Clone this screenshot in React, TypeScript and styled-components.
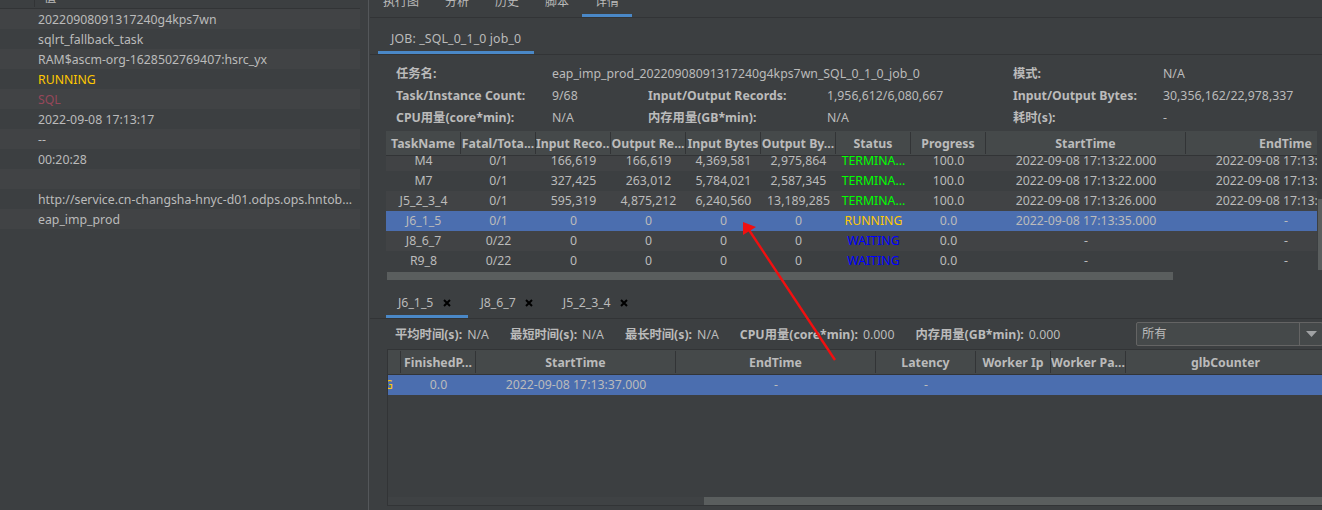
import React from 'react';
import styled, { createGlobalStyle } from 'styled-components';

const colors = {
    bg: '#3c3f41',
    alt: '#414345',
    head: '#45494a',
    line: '#323436',
    text: '#bbbbbb',
    select: '#4b6eaf',
    accent: '#4a88c7',
    thumb: '#5a5e5e',
};

const GlobalStyle = createGlobalStyle`
    html, body {
        margin: 0;
        padding: 0;
        background: ${colors.bg};
    }
    body {
        font-family: 'Noto Sans', 'Noto Sans CJK SC', sans-serif;
        font-size: 12.3px;
        color: ${colors.text};
    }
`;

type Status = 'done' | 'run' | 'wait';

const statusColor: Record<Status, string> = {
    done: '#00ff00',
    run: '#ffc800',
    wait: '#0000ff',
};

const sideRows: { text: string; color?: string }[] = [
    { text: '20220908091317240g4kps7wn' },
    { text: 'sqlrt_fallback_task' },
    { text: 'RAM$ascm-org-1628502769407:hsrc_yx' },
    { text: 'RUNNING', color: '#ffc800' },
    { text: 'SQL', color: '#96475a' },
    { text: '2022-09-08 17:13:17' },
    { text: '--' },
    { text: '00:20:28' },
    { text: '' },
    { text: 'http://service.cn-changsha-hnyc-d01.odps.ops.hntob...' },
    { text: 'eap_imp_prod' },
];

const taskColumns = 'repeat(8, 75px) 200px 200px';
const taskHeaders = [
    'TaskName',
    'Fatal/Tota...',
    'Input Reco...',
    'Output Re...',
    'Input Bytes',
    'Output By...',
    'Status',
    'Progress',
    'StartTime',
    'EndTime',
];

type Task = {
    cells: string[];
    status: Status;
    statusText: string;
    progress: string;
    start: string;
    end: string;
    selected?: boolean;
};

const tasks: Task[] = [
    { cells: ['M4', '0/1', '166,619', '166,619', '4,369,581', '2,975,864'], status: 'done', statusText: 'TERMINA...', progress: '100.0', start: '2022-09-08 17:13:22.000', end: '2022-09-08 17:13:25.000' },
    { cells: ['M7', '0/1', '327,425', '263,012', '5,784,021', '2,587,345'], status: 'done', statusText: 'TERMINA...', progress: '100.0', start: '2022-09-08 17:13:22.000', end: '2022-09-08 17:13:25.000' },
    { cells: ['J5_2_3_4', '0/1', '595,319', '4,875,212', '6,240,560', '13,189,285'], status: 'done', statusText: 'TERMINA...', progress: '100.0', start: '2022-09-08 17:13:26.000', end: '2022-09-08 17:13:34.000' },
    { cells: ['J6_1_5', '0/1', '0', '0', '0', '0'], status: 'run', statusText: 'RUNNING', progress: '0.0', start: '2022-09-08 17:13:35.000', end: '-', selected: true },
    { cells: ['J8_6_7', '0/22', '0', '0', '0', '0'], status: 'wait', statusText: 'WAITING', progress: '0.0', start: '-', end: '-' },
    { cells: ['R9_8', '0/22', '0', '0', '0', '0'], status: 'wait', statusText: 'WAITING', progress: '0.0', start: '-', end: '-' },
];

const instanceColumns = '13px 75px 200px 200px 100px 75px 75px 200px';
const instanceHeaders = ['', 'FinishedP...', 'StartTime', 'EndTime', 'Latency', 'Worker Ip', 'Worker Pa...', 'glbCounter'];

const mainTabs = ['执行图', '分析', '历史', '脚本', '详情'];

const stats = [
    { label: '平均时间(s):', value: 'N/A' },
    { label: '最短时间(s):', value: 'N/A' },
    { label: '最长时间(s):', value: 'N/A' },
    { label: 'CPU用量(core*min):', value: '0.000' },
    { label: '内存用量(GB*min):', value: '0.000' },
];

function CloseIcon() {
    return (
        <svg width="8" height="8" viewBox="0 0 8 8">
            <path d="M1 1L7 7M7 1L1 7" stroke="#000" strokeWidth="2" />
        </svg>
    );
}

function App() {
    return (
        <Page>
            <GlobalStyle />
            <SidePanel>
                <SideHead>
                    <SideHeadKey />
                    <SideHeadValue>值</SideHeadValue>
                </SideHead>
                {sideRows.map((row, i) => (
                    <SideRow key={i} $odd={i % 2 === 0} $color={row.color}>
                        {row.text}
                    </SideRow>
                ))}
            </SidePanel>
            <Main>
                <MainTabs>
                    {mainTabs.map((tab, i) => (
                        <MainTab key={tab} $active={i === 4}>
                            {tab}
                        </MainTab>
                    ))}
                </MainTabs>
                <JobTabs>
                    <JobTab>JOB: _SQL_0_1_0 job_0</JobTab>
                </JobTabs>
                <InfoGrid>
                    <InfoLabel>任务名:</InfoLabel>
                    <InfoValue $wide>eap_imp_prod_20220908091317240g4kps7wn_SQL_0_1_0_job_0</InfoValue>
                    <InfoLabel>模式:</InfoLabel>
                    <InfoValue>N/A</InfoValue>
                    <InfoLabel>Task/Instance Count:</InfoLabel>
                    <InfoValue>9/68</InfoValue>
                    <InfoLabel>Input/Output Records:</InfoLabel>
                    <InfoValue>1,956,612/6,080,667</InfoValue>
                    <InfoLabel>Input/Output Bytes:</InfoLabel>
                    <InfoValue>30,356,162/22,978,337</InfoValue>
                    <InfoLabel>CPU用量(core*min):</InfoLabel>
                    <InfoValue>N/A</InfoValue>
                    <InfoLabel>内存用量(GB*min):</InfoLabel>
                    <InfoValue>N/A</InfoValue>
                    <InfoLabel>耗时(s):</InfoLabel>
                    <InfoValue>-</InfoValue>
                </InfoGrid>
                <TaskArea>
                    <TaskTable>
                        <HeadRow $columns={taskColumns}>
                            {taskHeaders.map((h) => (
                                <HeadCell key={h}>{h}</HeadCell>
                            ))}
                        </HeadRow>
                        <TaskBody>
                            <TaskRows>
                                {tasks.map((task, i) => (
                                    <DataRow
                                        key={task.cells[0]}
                                        $columns={taskColumns}
                                        $selected={task.selected}
                                        $odd={i % 2 === 0 || i === 4}
                                    >
                                        {task.cells.map((c, j) => (
                                            <Cell key={j}>{c}</Cell>
                                        ))}
                                        <Cell $color={statusColor[task.status]}>{task.statusText}</Cell>
                                        <Cell>{task.progress}</Cell>
                                        <Cell>{task.start}</Cell>
                                        <Cell>{task.end}</Cell>
                                    </DataRow>
                                ))}
                            </TaskRows>
                        </TaskBody>
                        <TaskScroll />
                    </TaskTable>
                    <VScroll />
                </TaskArea>
                <BottomTabs>
                    <BottomTab $active>
                        J6_1_5
                        <CloseIcon />
                    </BottomTab>
                    <BottomTab>
                        J8_6_7
                        <CloseIcon />
                    </BottomTab>
                    <BottomTab>
                        J5_2_3_4
                        <CloseIcon />
                    </BottomTab>
                </BottomTabs>
                <StatsBar>
                    {stats.map((s) => (
                        <Stat key={s.label}>
                            <StatLabel>{s.label}</StatLabel>
                            <span>{s.value}</span>
                        </Stat>
                    ))}
                    <Combo>
                        <ComboText>所有</ComboText>
                        <ComboButton>
                            <svg width="11" height="6" viewBox="0 0 11 6">
                                <path d="M0 0H11L5.5 6Z" fill="#a0a2a4" />
                            </svg>
                        </ComboButton>
                    </Combo>
                </StatsBar>
                <InstancePanel>
                    <HeadRow $columns={instanceColumns}>
                        {instanceHeaders.map((h) => (
                            <HeadCell key={h}>{h}</HeadCell>
                        ))}
                    </HeadRow>
                    <DataRow $columns={instanceColumns} $selected>
                        <ClippedStatus>G</ClippedStatus>
                        <Cell>0.0</Cell>
                        <Cell>2022-09-08 17:13:37.000</Cell>
                        <Cell>-</Cell>
                        <Cell>-</Cell>
                    </DataRow>
                    <InstanceSpacer />
                    <InstanceScroll>
                        <InstanceThumb />
                    </InstanceScroll>
                </InstancePanel>
            </Main>
            <ArrowMark viewBox="0 0 120 160" width="120" height="160">
                <path d="M115 150L29 20" stroke="#f01010" strokeWidth="2.4" fill="none" />
                <path d="M23 12L36 17L23 25Z" fill="#f01010" />
            </ArrowMark>
        </Page>
    );
}

export default App;

const Page = styled.div`
    position: relative;
    width: 1322px;
    height: 510px;
    overflow: hidden;
    display: flex;
    background: ${colors.bg};
`;

const SidePanel = styled.div`
    width: 369px;
    flex-shrink: 0;
    box-sizing: border-box;
    padding-right: 8px;
    border-right: 1px solid #54575a;
    margin-right: 1px;
`;

const SideHead = styled.div`
    height: 8px;
    display: flex;
    border-bottom: 1px solid ${colors.line};
    overflow: hidden;
`;

const SideHeadKey = styled.div`
    width: 34px;
    height: 7px;
    border-right: 1px solid ${colors.line};
`;

const SideHeadValue = styled.div`
    margin: -12px 0 0 9px;
    line-height: 20px;
`;

const SideRow = styled.div<{ $odd: boolean; $color?: string }>`
    height: 20px;
    line-height: 22px;
    padding-left: 38px;
    white-space: nowrap;
    overflow: hidden;
    background: ${(props) => (props.$odd ? colors.alt : colors.bg)};
    color: ${(props) => props.$color || colors.text};
`;

const Main = styled.div`
    flex: 1;
    min-width: 0;
    display: flex;
    flex-direction: column;
`;

const MainTabs = styled.div`
    height: 25px;
    margin-top: -8px;
    flex-shrink: 0;
    display: flex;
    border-bottom: 1px solid ${colors.line};
`;

const MainTab = styled.div<{ $active?: boolean }>`
    padding: 0 13px;
    font-size: 12px;
    line-height: 20px;
    box-sizing: border-box;
    border-bottom: 3px solid ${(props) => (props.$active ? colors.accent : 'transparent')};
`;

const JobTabs = styled.div`
    height: 36px;
    flex-shrink: 0;
    display: flex;
    padding-left: 8px;
    border-bottom: 1px solid ${colors.line};
`;

const JobTab = styled.div`
    width: 156px;
    box-sizing: border-box;
    padding: 11px 0 0 13px;
    line-height: 20px;
    letter-spacing: 0.15px;
    border-bottom: 3px solid ${colors.accent};
`;

const InfoGrid = styled.div`
    margin: 8px 0 0 26px;
    display: grid;
    grid-template-columns: 156px 96px 179px 186px 150px 1fr;
    grid-auto-rows: 22px;
    line-height: 22px;
`;

const InfoLabel = styled.div`
    font-weight: 700;
`;

const InfoValue = styled.div<{ $wide?: boolean }>`
    grid-column: ${(props) => (props.$wide ? 'span 3' : 'auto')};
`;

const TaskArea = styled.div`
    margin: 2px 0 0 16px;
    display: flex;
    gap: 1px;
    flex-shrink: 0;
`;

const TaskTable = styled.div`
    width: 931px;
    overflow: hidden;
`;

const HeadRow = styled.div<{ $columns: string }>`
    height: 24px;
    display: grid;
    grid-template-columns: ${(props) => props.$columns};
    background: ${colors.head};
    border-bottom: 1px solid ${colors.line};
    font-weight: 700;
`;

const HeadCell = styled.div`
    margin: 1px 0;
    line-height: 24px;
    text-align: center;
    white-space: nowrap;
    overflow: hidden;
    border-right: 1px solid ${colors.line};
`;

const TaskBody = styled.div`
    height: 115px;
    overflow: hidden;
`;

const TaskRows = styled.div`
    margin-top: -5px;
`;

const DataRow = styled.div<{ $columns: string; $selected?: boolean; $odd?: boolean }>`
    height: 20px;
    display: grid;
    grid-template-columns: ${(props) => props.$columns};
    line-height: 20px;
    background: ${(props) => (props.$selected ? colors.select : props.$odd ? colors.alt : colors.bg)};
`;

const Cell = styled.div<{ $color?: string }>`
    text-align: center;
    white-space: nowrap;
    overflow: hidden;
    color: ${(props) => props.$color || colors.text};
`;

const ClippedStatus = styled.div`
    overflow: hidden;
    text-indent: -4px;
    color: #ffc800;
`;

const TaskScroll = styled.div`
    width: 786px;
    height: 8px;
    margin: 1px 0 0 1px;
    background: ${colors.thumb};
`;

const VScroll = styled.div`
    width: 4px;
    height: 71px;
    margin-top: 68px;
    background: ${colors.thumb};
`;

const BottomTabs = styled.div`
    height: 25px;
    margin-top: 13px;
    flex-shrink: 0;
    display: flex;
    padding-left: 16px;
    border-bottom: 1px solid ${colors.line};
`;

const BottomTab = styled.div<{ $active?: boolean }>`
    display: flex;
    align-items: center;
    gap: 9.5px;
    height: 25px;
    box-sizing: border-box;
    padding: 0 17.5px 3px 12px;
    border-bottom: 3px solid ${(props) => (props.$active ? colors.accent : 'transparent')};
`;

const StatsBar = styled.div`
    height: 30px;
    flex-shrink: 0;
    display: flex;
    align-items: center;
    gap: 21px;
    padding-left: 25px;
`;

const Stat = styled.div`
    display: flex;
    align-items: baseline;
    gap: 5px;
    padding-top: 2px;
    line-height: 20px;
    white-space: nowrap;
`;

const StatLabel = styled.span`
    font-weight: 700;
`;

const Combo = styled.div`
    width: 187px;
    height: 24px;
    box-sizing: border-box;
    margin: 0 -1px 0 auto;
    flex-shrink: 0;
    display: flex;
    background: ${colors.head};
    border: 1px solid #646464;
    border-radius: 2px;
`;

const ComboText = styled.div`
    flex: 1;
    padding-left: 5px;
    line-height: 22px;
`;

const ComboButton = styled.div`
    width: 22px;
    display: flex;
    align-items: center;
    justify-content: center;
    border-left: 1px solid #646464;
`;

const InstancePanel = styled.div`
    height: 157px;
    box-sizing: border-box;
    flex-shrink: 0;
    margin-left: 17px;
    display: flex;
    flex-direction: column;
    overflow: hidden;
    border: 1px solid ${colors.line};
    border-width: 1px 0 1px 1px;
`;

const InstanceSpacer = styled.div`
    flex: 1;
`;

const InstanceScroll = styled.div`
    height: 8px;
    flex-shrink: 0;
    display: flex;
    padding-left: 316px;
    background: #3f4244;
`;

const InstanceThumb = styled.div`
    flex: 1;
    background: ${colors.thumb};
`;

const ArrowMark = styled.svg`
    position: absolute;
    left: 720px;
    top: 210px;
    pointer-events: none;
`;
